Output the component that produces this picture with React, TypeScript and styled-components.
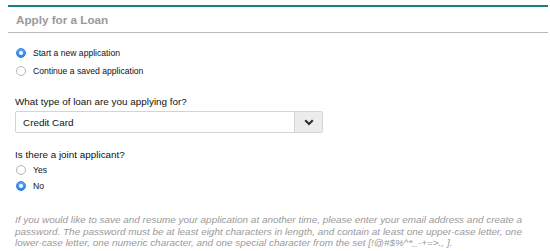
import React, { useState } from "react";
import styled, { createGlobalStyle } from "styled-components";

const GlobalStyle = createGlobalStyle`
  html, body {
    margin: 0;
    padding: 0;
    background: #fff;
    font-family: "Liberation Sans", Arial, Helvetica, sans-serif;
  }
`;

const Panel = styled.div`
  margin: 5px 2px 0 8px;
  border-top: 2px solid #0f8383;
`;

const Header = styled.div`
  height: 25px;
  display: flex;
  align-items: center;
  padding-left: 8px;
  border-bottom: 1px solid #b9b9b9;
`;

const Title = styled.h2`
  margin: 0;
  font-size: 11.7px;
  font-weight: bold;
  color: #9a9a9a;
`;

const Body = styled.div`
  padding: 12px 0 0 7px;
`;

const RadioList = styled.div<{ $gap: number }>`
  display: flex;
  flex-direction: column;
  gap: ${(p) => p.$gap}px;
`;

const RadioRow = styled.label`
  display: flex;
  align-items: center;
  height: 16px;
  font-size: 8.6px;
  color: #111;
  cursor: pointer;
`;

const Dot = styled.span<{ $on: boolean }>`
  width: 10px;
  height: 10px;
  margin-left: 1px;
  margin-right: 7px;
  box-sizing: border-box;
  border-radius: 50%;
  display: inline-flex;
  align-items: center;
  justify-content: center;
  background: ${(p) => (p.$on ? "linear-gradient(#5aa8ff, #2b7ef0)" : "#fff")};
  border: 1px solid ${(p) => (p.$on ? "#2f7fe6" : "#b5b5b5")};
  &::after {
    content: "";
    width: 4px;
    height: 4px;
    border-radius: 50%;
    background: #fff;
    display: ${(p) => (p.$on ? "block" : "none")};
  }
`;

const Question = styled.div<{ $top: number }>`
  margin-top: ${(p) => p.$top}px;
  font-size: 9.9px;
  color: #111;
  line-height: 14px;
`;

const Select = styled.div`
  margin-top: 2px;
  width: 308px;
  height: 22px;
  box-sizing: border-box;
  border: 1px solid #d4d4d4;
  border-radius: 2px;
  display: flex;
  align-items: stretch;
`;

const SelectValue = styled.div`
  flex: 1;
  display: flex;
  align-items: center;
  padding-left: 7px;
  font-size: 9.9px;
  color: #111;
`;

const SelectButton = styled.div`
  width: 27px;
  background: #ececec;
  border-left: 1px solid #d4d4d4;
  display: flex;
  align-items: center;
  justify-content: center;
`;

const Note = styled.p`
  margin: 20px 0 0;
  font-size: 9.95px;
  line-height: 11.6px;
  font-style: italic;
  color: #9a9a9a;
  white-space: nowrap;
`;

function Radio({ label, on, onPick }: { label: string; on: boolean; onPick: () => void }) {
  return (
    <RadioRow onClick={onPick}>
      <Dot $on={on} />
      {label}
    </RadioRow>
  );
}

export default function App() {
  const [mode, setMode] = useState("new");
  const [joint, setJoint] = useState("no");
  return (
    <>
      <GlobalStyle />
      <Panel>
        <Header>
          <Title>Apply for a Loan</Title>
        </Header>
        <Body>
          <RadioList $gap={2}>
            <Radio label="Start a new application" on={mode === "new"} onPick={() => setMode("new")} />
            <Radio label="Continue a saved application" on={mode === "saved"} onPick={() => setMode("saved")} />
          </RadioList>
          <Question $top={16}>What type of loan are you applying for?</Question>
          <Select>
            <SelectValue>Credit Card</SelectValue>
            <SelectButton>
              <svg width="10" height="7" viewBox="0 0 10 7">
                <path d="M1.2 1.2 L5 5 L8.8 1.2" fill="none" stroke="#333" strokeWidth="2.2" />
              </svg>
            </SelectButton>
          </Select>
          <Question $top={15}>Is there a joint applicant?</Question>
          <RadioList $gap={0}>
            <Radio label="Yes" on={joint === "yes"} onPick={() => setJoint("yes")} />
            <Radio label="No" on={joint === "no"} onPick={() => setJoint("no")} />
          </RadioList>
          <Note>
            If you would like to save and resume your application at another time, please enter your email address and create a
            <br />
            password. The password must be at least eight characters in length, and contain at least one upper-case letter, one
            <br />
            lower-case letter, one numeric character, and one special character from the set [!@#$%^*_-+=&gt;., ].
          </Note>
        </Body>
      </Panel>
    </>
  );
}
